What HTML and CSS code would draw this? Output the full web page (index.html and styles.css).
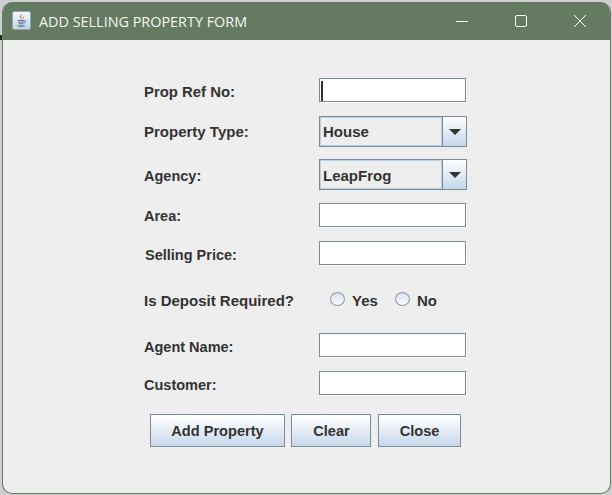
FILE: index.html
```html
<!DOCTYPE html>
<html lang="en">
<head>
<meta charset="utf-8">
<title>Add Selling Property Form</title>
<link rel="stylesheet" href="styles.css">
</head>
<body>
<span class="desktop-scrap"></span>
<div class="window">
  <header class="titlebar">
    <svg class="app-icon" width="19" height="19" viewBox="0 0 20 20" aria-hidden="true">
      <defs>
        <linearGradient id="tile" x1="0" y1="0" x2="0" y2="1">
          <stop offset="0" stop-color="#f6f8fb"/>
          <stop offset="1" stop-color="#c3d4e6"/>
        </linearGradient>
      </defs>
      <rect x="0.5" y="0.5" width="19" height="19" rx="2" fill="url(#tile)" stroke="#8fa3b8"/>
      <path d="M10.500 2.500c1 1.700-1.800 2.900-.8 4.700.4.700.8 1.100.8 1.700-.9-.5-2.500-1.600-2.100-3.200.3-1.300 2.100-1.800 2.100-3.200z" fill="#e2762a"/>
      <path d="M12.700 5.200c-1 .6-1.600 1.300-1.300 2.100.2.500.2 1.100-.2 1.500.9-.4 1.400-1.100 1.100-1.900-.2-.6 0-1.100.4-1.700z" fill="#e2762a"/>
      <path d="M6 10h7M6.500 11.800h6M7 13.500h5" stroke="#4f6d92" stroke-width="1" fill="none"/>
      <path d="M13 10.200c2-.6 2.500 1.800-.6 2.500" stroke="#4f6d92" stroke-width=".9" fill="none"/>
      <path d="M5 15.200h9.500c-.8.800-2 1.300-4.700 1.300s-4-.5-4.800-1.300z" fill="#4f6d92"/>
    </svg>
    <h1 class="title">ADD SELLING PROPERTY FORM</h1>
    <div class="controls">
      <svg class="ctl" width="14" height="14" viewBox="0 0 14 14" aria-hidden="true"><path d="M1 7.500h12" stroke="#fff" stroke-width="1" fill="none"/></svg>
      <svg class="ctl" width="14" height="14" viewBox="0 0 14 14" aria-hidden="true"><rect x="1.500" y="1.500" width="11" height="11" rx="1.500" stroke="#fff" stroke-width="1" fill="none"/></svg>
      <svg class="ctl" width="14" height="14" viewBox="0 0 14 14" aria-hidden="true"><path d="M1 1l12 12M13 1L1 13" stroke="#fff" stroke-width="1" fill="none"/></svg>
    </div>
  </header>
  <main class="form">
    <div class="row row-ref">
      <span class="label label-low label-ref">Prop Ref No:</span>
      <div class="field"><span class="caret"></span></div>
    </div>
    <div class="row row-type">
      <span class="label label-wide">Property Type:</span>
      <div class="combo"><span class="combo-value">House</span><span class="combo-btn"><span class="arrow"></span></span></div>
    </div>
    <div class="row row-agency">
      <span class="label label-low">Agency:</span>
      <div class="combo"><span class="combo-value combo-value-low">LeapFrog</span><span class="combo-btn"><span class="arrow"></span></span></div>
    </div>
    <div class="row row-area">
      <span class="label label-mid">Area:</span>
      <div class="field"></div>
    </div>
    <div class="row row-price">
      <span class="label label-shift label-low">Selling Price:</span>
      <div class="field"></div>
    </div>
    <div class="row row-deposit">
      <span class="label label-wide">Is Deposit Required?</span>
      <div class="radios">
        <span class="radio"></span><span class="radio-text">Yes</span>
        <span class="radio radio-second"></span><span class="radio-text">No</span>
      </div>
    </div>
    <div class="row row-agent">
      <span class="label label-low">Agent Name:</span>
      <div class="field"></div>
    </div>
    <div class="row row-customer">
      <span class="label label-low">Customer:</span>
      <div class="field"></div>
    </div>
    <div class="buttons">
      <button class="btn btn-add" type="button">Add Property</button>
      <button class="btn btn-clear" type="button">Clear</button>
      <button class="btn btn-close" type="button">Close</button>
    </div>
  </main>
</div>
</body>
</html>
```
FILE: styles.css
```css
* { box-sizing: border-box; }
html, body { margin: 0; height: 100%; }
body {
  position: relative;
  background: #cfcfcf;
  padding: 2px 1px 1px 2px;
  overflow: hidden;
  font-family: "Liberation Sans", Arial, sans-serif;
}
.desktop-scrap {
  position: absolute;
  left: 0;
  top: 35px;
  width: 2px;
  height: 5px;
  background: #222;
}
.window {
  width: 609px;
  height: 492px;
  background: #eeeeee;
  border: 1px solid #657b61;
  border-top: 0;
  border-radius: 10px;
  overflow: hidden;
  display: flex;
  flex-direction: column;
}
.titlebar {
  height: 38px;
  flex: none;
  background: #657b61;
  display: flex;
  align-items: center;
  padding-left: 9px;
  color: #fff;
}
.app-icon { flex: none; margin: 0 8px 2px 0; }
.title {
  margin: 0;
  font: 400 14.4px "Open Sans", sans-serif;
  color: #f4f6f3;
  flex: 1;
}
.controls { display: flex; align-items: center; gap: 45px; padding-right: 23px; }
.ctl { display: block; }
.form { padding: 38px 0 0 141px; flex: 1; }
.row { display: flex; align-items: center; }
.label {
  width: 175px;
  flex: none;
  font-size: 14.5px;
  font-weight: 700;
  color: #333;
}
.label-wide { font-size: 15px; }
.label-ref { font-size: 14.9px; }
.label-shift { padding-left: 1px; }
.label-low { padding-top: 3px; }
.label-mid { padding-top: 2px; }
.row-type { margin-top: 14px; }
.row-agency { margin-top: 12px; }
.row-area { margin-top: 13px; }
.row-price { margin-top: 14px; }
.row-deposit { margin-top: 24px; height: 22px; }
.row-agent { margin-top: 22px; }
.row-customer { margin-top: 14px; }
.field {
  width: 147px;
  height: 24px;
  background: #fff;
  border: 1px solid #7a8a99;
  box-shadow: 1px 1px 0 #fff;
  padding: 2px 1px;
}
.caret { display: block; width: 2px; height: 20px; background: #333; }
.combo {
  width: 148px;
  height: 31px;
  display: flex;
  border: 1px solid #7a8a99;
  background: #eeeeee;
}
.combo-value {
  flex: 1;
  display: flex;
  align-items: center;
  padding-left: 2px;
  border: 1px solid #b8cfe5;
  font-size: 15px;
  font-weight: 700;
  color: #333;
}
.combo-value-low { padding-top: 2px; }
.combo-btn {
  width: 24px;
  flex: none;
  border-left: 1px solid #7a8a99;
  background: linear-gradient(#fdfeff, #c6d7ea);
  display: flex;
  align-items: center;
  justify-content: center;
}
.arrow {
  width: 0;
  height: 0;
  border-left: 6px solid transparent;
  border-right: 6px solid transparent;
  border-top: 6px solid #333;
}
.radios { display: flex; align-items: center; padding-left: 11px; }
.radio {
  width: 15px;
  height: 14px;
  margin-bottom: 3px;
  border-radius: 50%;
  border: 1px solid #8a99a8;
  background: linear-gradient(#d5e0ec, #fdfeff);
  flex: none;
}
.radio-second { margin-left: 17px; }
.radio-text { font-size: 15px; font-weight: 700; color: #333; margin-left: 7px; }
.buttons { display: flex; margin-top: 19px; margin-left: 6px; }
.btn {
  height: 33px;
  padding: 0;
  border: 1px solid #7a8a99;
  background: linear-gradient(#fdfeff 10%, #c6d7ea);
  font: 700 14.6px "Liberation Sans", Arial, sans-serif;
  color: #333;
}
.btn-add { width: 135px; }
.btn-clear { width: 80px; margin-left: 6px; padding-left: 1px; }
.btn-close { width: 83px; margin-left: 7px; }
```
